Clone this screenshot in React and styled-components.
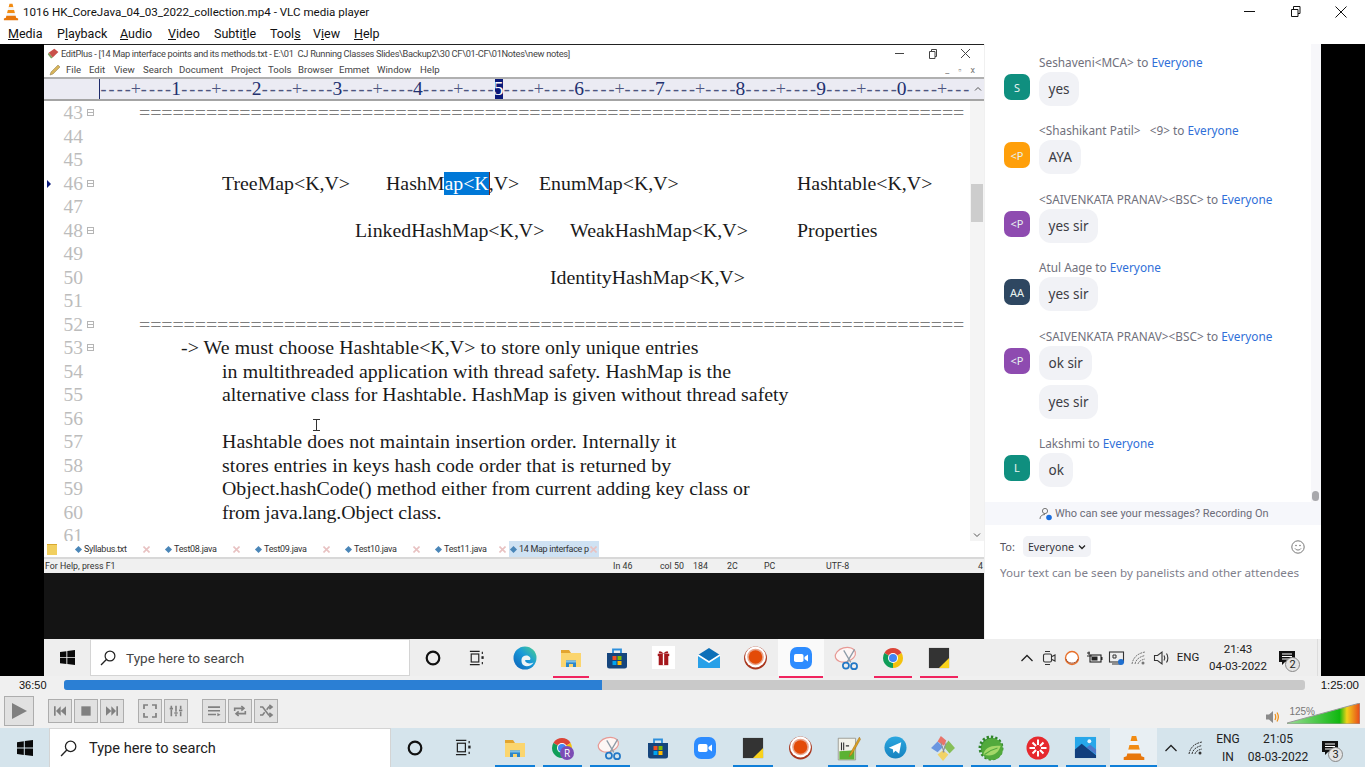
import React from 'react';
import styled, { createGlobalStyle } from 'styled-components';

const GlobalStyle = createGlobalStyle`
  html, body {
    margin: 0;
    padding: 0;
    background: #000;
    overflow: hidden;
  }
`;

const UI_FONT = `Roboto, "Noto Sans", sans-serif`;
const CHAT_FONT = `"Noto Sans", "Open Sans", sans-serif`;
const SERIF = `"Liberation Serif", serif`;

/* ---------- small drawings ---------- */

const SvgBox = styled.svg`
  display: block;
  flex: none;
`;

const Svg = ({ s = 24, w, h, box = '0 0 24 24', children }) => (
  <SvgBox width={w || s} height={h || s} viewBox={box}>
    {children}
  </SvgBox>
);

const Cone = ({ s = 18 }) => (
  <Svg s={s}>
    <path d="M10 1h4l1.2 4.5H8.800z" fill="#f28c13" />
    <path d="M8.800 5.500h6.400l1 3.800H7.800z" fill="#f5f5f5" />
    <path d="M7.800 9.300h8.400l1.100 4.400H6.700z" fill="#f28c13" />
    <path d="M6.700 13.700h10.600l.9 3.300H5.800z" fill="#f5f5f5" />
    <path d="M5.800 17h12.400l.6 2.500 2.700 1v2.500H2.500v-2.500l2.700-1z" fill="#e8770c" />
  </Svg>
);

const WinLogo = ({ s = 16, c = '#0a0a0a' }) => (
  <Svg s={s} box="0 0 16 16">
    <path d="M0 2.200l6.800-1v6.400H0zM7.800 1l8.200-1v7.600H7.800zM0 8.600h6.800v6.300L0 14zM7.800 8.600H16V16l-8.200-1.100z" fill={c} />
  </Svg>
);

const SearchGlyph = ({ s = 16 }) => (
  <Svg s={s} box="0 0 16 16">
    <circle cx="10" cy="6" r="4.900" fill="none" stroke="#222" strokeWidth="1.200" />
    <path d="M6.400 9.500L1 15" stroke="#222" strokeWidth="1.300" />
  </Svg>
);

const Ring = ({ s = 16 }) => (
  <Svg s={s} box="0 0 16 16">
    <circle cx="8" cy="8" r="6.300" fill="none" stroke="#111" strokeWidth="2.200" />
  </Svg>
);

const TaskView = ({ s = 18 }) => (
  <Svg s={s} box="0 0 18 18">
    <path d="M1 1.500h11M1 16.500h11" stroke="#222" strokeWidth="1.300" />
    <rect x="2.500" y="4.500" width="8.500" height="9" fill="none" stroke="#222" strokeWidth="1.300" />
    <path d="M15 2v2.500M15 13.500V16" stroke="#222" strokeWidth="1.300" />
    <rect x="14" y="7" width="2.500" height="3" fill="#222" />
  </Svg>
);

const Edge = () => (
  <Svg s={24}>
    <defs>
      <linearGradient id="edgeFill" x1="0" y1="1" x2="1" y2="0">
        <stop offset="0" stopColor="#0b5fb8" />
        <stop offset=".55" stopColor="#1a9bd8" />
        <stop offset="1" stopColor="#4fd28a" />
      </linearGradient>
    </defs>
    <circle cx="12" cy="12" r="11.500" fill="url(#edgeFill)" />
    <path d="M8.500 13.500c.2-3.800 6-5.400 8.400-2.300.8 1 .7 2.300-.2 2.900h-4.500c-.6 2.600 3.300 4.700 8.300 2.300-1.600 3-6.200 4.800-9.500 3.200-2.200-1-2.700-3.800-2.500-6.100z" fill="#eef4f6" />
  </Svg>
);

const Folder = () => (
  <Svg s={24}>
    <path d="M2 4h8l2 3H2z" fill="#e3a52f" />
    <rect x="2" y="7" width="20" height="14" fill="#fbd56e" />
    <path d="M7 21v-6.500h10V21h-3v-3h-4v3z" fill="#2c86c9" />
    <rect x="7" y="14.500" width="10" height="2" fill="#7cc0e8" />
  </Svg>
);

const Store = () => (
  <Svg s={24}>
    <path d="M8 7V3.500h8V7" fill="none" stroke="#2e8fdc" strokeWidth="1.800" />
    <path d="M2 7h20v13a2.500 2.500 0 0 1-2.500 2.500h-15A2.500 2.500 0 0 1 2 20z" fill="#15457d" />
    <rect x="7.500" y="10" width="4" height="4" fill="#f25022" />
    <rect x="12.500" y="10" width="4" height="4" fill="#7fba00" />
    <rect x="7.500" y="15" width="4" height="4" fill="#00a4ef" />
    <rect x="12.500" y="15" width="4" height="4" fill="#ffb900" />
  </Svg>
);

const Gift = () => (
  <Svg s={23}>
    <rect width="24" height="24" fill="#fff" />
    <path d="M7 10h10v10H7z" fill="#a5171c" />
    <rect x="6" y="8" width="12" height="2.500" fill="#a5171c" />
    <rect x="11.300" y="8" width="1.400" height="12" fill="#fff" />
    <path d="M12 8c-3-4-6-2.500-4.500-.5zM12 8c3-4 6-2.500 4.500-.5z" fill="#a5171c" />
  </Svg>
);

const Mail = () => (
  <Svg s={24}>
    <path d="M1 9l11-7 11 7v13H1z" fill="#0c6fb8" />
    <path d="M1 9l11 7 11-7v13H1z" fill="#28a0e8" />
    <path d="M1 9l11 7 11-7" fill="none" stroke="#fff" strokeWidth="1.500" />
  </Svg>
);

const Record = () => (
  <Svg s={25}>
    <circle cx="12" cy="12.500" r="11" fill="#a9361d" />
    <circle cx="12" cy="11.500" r="10" fill="#fff" />
    <circle cx="12" cy="11.500" r="8" fill="#e8a48c" />
    <circle cx="12" cy="11.500" r="6.500" fill="#e34b08" />
  </Svg>
);

const ZoomApp = () => (
  <Svg s={24}>
    <rect x="1" y="1" width="22" height="22" rx="7" fill="#2d8cff" />
    <rect x="5" y="8" width="9.500" height="8" rx="1.800" fill="#fff" />
    <path d="M15.500 11l3.500-2.600v7.200L15.500 13z" fill="#fff" />
  </Svg>
);

const Snip = () => (
  <Svg s={26}>
    <ellipse cx="10.500" cy="9" rx="9.500" ry="6.500" transform="rotate(-15 10.500 9)" fill="#fdf6f5" stroke="#e79a95" strokeWidth="1.100" />
    <path d="M9 5l6.500 11M19 4l-7 12" stroke="#8f9ca8" strokeWidth="1.200" />
    <circle cx="11" cy="19" r="2.800" fill="none" stroke="#2378c6" strokeWidth="1.600" />
    <circle cx="18.500" cy="19.500" r="2.800" fill="none" stroke="#2378c6" strokeWidth="1.600" />
  </Svg>
);

const Chrome = ({ badge }) => (
  <Svg s={24}>
    <path d="M12 12L3.340 7A10 10 0 0 1 20.660 7z" fill="#db4437" />
    <path d="M12 12l8.660-5A10 10 0 0 1 12 22z" fill="#f4c20d" />
    <path d="M12 12v10A10 10 0 0 1 3.340 7z" fill="#0f9d58" />
    <circle cx="12" cy="12" r="5" fill="#fff" />
    <circle cx="12" cy="12" r="4" fill="#4285f4" />
    {badge && (
      <>
        <circle cx="17" cy="17" r="7" fill="#7c4db5" />
        <text x="17" y="20.500" textAnchor="middle" fontSize="10" fontFamily="Open Sans" fill="#fff">R</text>
      </>
    )}
  </Svg>
);

const Sticky = () => (
  <Svg s={22}>
    <rect x="1" y="1" width="22" height="22" fill="#333" />
    <path d="M23 12v11H12z" fill="#f9d21c" />
  </Svg>
);

const NotePad = () => (
  <Svg s={26}>
    <path d="M3 3h16v20H3z" fill="#f3f3ea" stroke="#8a8a80" strokeWidth=".7" />
    <path d="M4 15l14-1v8.500H4z" fill="#5cb233" />
    <path d="M6 7v7M8 7v7M10 10h3" stroke="#333" strokeWidth="1" />
    <path d="M22.500 2l-8.500 15-1 3 2.500-2L23.500 4z" fill="#d9a21f" stroke="#a56a18" strokeWidth=".5" />
  </Svg>
);

const Telegram = () => (
  <Svg s={23}>
    <defs>
      <linearGradient id="tgFill" x1="0" y1="0" x2="0" y2="1">
        <stop offset="0" stopColor="#2ba7e0" />
        <stop offset="1" stopColor="#1682bf" />
      </linearGradient>
    </defs>
    <circle cx="12" cy="12" r="11.500" fill="url(#tgFill)" />
    <path d="M5 12.300l13-5.800-2.200 12-3.800-3-2.200 2.200-.6-4z" fill="#fff" />
  </Svg>
);

const Gems = () => (
  <Svg s={26}>
    <path d="M10 1l5 4-2 5-6-4z" fill="#e8736a" />
    <path d="M1 12l6-6 5 5-5 5z" fill="#6a96e0" />
    <path d="M17 5l6 7-5 5-5-6z" fill="#86bf58" />
    <path d="M12 14l5 4-5 6-5-6z" fill="#f2d365" />
    <path d="M10 7l3 9M15 7l-3 9" stroke="#8b8f96" strokeWidth="1" />
  </Svg>
);

const Leaf = () => (
  <Svg s={26}>
    <circle cx="12" cy="12" r="9.500" fill="#399432" stroke="#2f8429" strokeWidth="4" strokeDasharray="2 1.700" />
    <circle cx="13" cy="13" r="10" fill="#52aa3c" />
    <path d="M5 18c1-6 7-9 16-8-2 7-8 11-16 8z" fill="#a4d868" />
    <path d="M6 18c4-3 8-5 12-6" stroke="#52aa3c" strokeWidth="1" fill="none" />
  </Svg>
);

const RedStar = () => (
  <Svg s={24}>
    <circle cx="12" cy="12" r="11.500" fill="#e6292e" />
    <path d="M12 3.500v5.500M12 15v5.500M3.500 12H9M15 12h5.500M6.500 6.500L10 10M14 14l3.500 3.500M17.500 6.500L14 10M10 14l-3.500 3.500" stroke="#fff" strokeWidth="2" />
  </Svg>
);

const Photo = () => (
  <Svg s={23}>
    <rect x="1" y="1" width="22" height="22" fill="#27a7ea" />
    <path d="M1 23v-9l7-6 15 12v3z" fill="#123f7d" />
    <path d="M13 12l4-3 6 5v5z" fill="#4f78c9" />
    <circle cx="16" cy="5.500" r="2" fill="#eaf7ff" />
  </Svg>
);

/* ---------- tray glyphs ---------- */

const Caret = () => (
  <Svg s={14} box="0 0 14 14">
    <path d="M1.500 10L7 4.500 12.500 10" fill="none" stroke="#222" strokeWidth="1.300" />
  </Svg>
);

const Wifi = ({ c = '#333' }) => (
  <Svg s={16} box="0 0 16 16">
    <path d="M1 14C2 8 6 3.500 14 2M4 14c.8-4 3.500-7 10-8.500M7 14c.5-2 2-3.800 7-5" fill="none" stroke={c} strokeWidth="1" strokeDasharray="2 .8" />
    <circle cx="12" cy="13" r="1.500" fill={c} />
  </Svg>
);

const Speaker = () => (
  <Svg s={18} box="0 0 18 18">
    <path d="M1.500 6.500h3L9 3v12l-4.500-3.500h-3z" fill="none" stroke="#333" strokeWidth="1.100" />
    <path d="M11 6.500c1 1.500 1 3.500 0 5M13.500 4.500c1.800 2.500 1.800 6.500 0 9" fill="none" stroke="#333" strokeWidth="1.100" />
  </Svg>
);

const CamTray = () => (
  <Svg s={16} box="0 0 16 16">
    <rect x="2.500" y="4" width="8" height="8" rx="1.500" fill="none" stroke="#333" strokeWidth="1.100" />
    <path d="M11 6.500l3-1.500v6l-3-1.500M4 1.500h5M4 14.500h5" fill="none" stroke="#333" strokeWidth="1.100" />
  </Svg>
);

const RingTray = () => (
  <Svg s={16} box="0 0 16 16">
    <circle cx="8" cy="8" r="6.500" fill="#fff" stroke="#e8702a" strokeWidth="1.400" />
    <path d="M2 9c1 5 10 6 12 0" fill="none" stroke="#9c4a2a" strokeWidth="1" />
  </Svg>
);

const BatteryTray = () => (
  <Svg s={17} box="0 0 17 17">
    <path d="M1 4h3M3 2.500V6M1 7h5" stroke="#222" strokeWidth="1" />
    <rect x="4" y="6" width="11" height="7" fill="none" stroke="#222" strokeWidth="1.100" />
    <rect x="5.500" y="7.500" width="6" height="4" fill="#222" />
    <rect x="15" y="8" width="1.500" height="3" fill="#222" />
  </Svg>
);

const ScreenTray = () => (
  <Svg s={18} box="0 0 18 18">
    <rect x="1.500" y="3" width="14" height="10" fill="none" stroke="#333" strokeWidth="1.100" />
    <path d="M5 6h3v3H5zM4 15h9" fill="none" stroke="#333" strokeWidth="1" />
    <circle cx="13" cy="13" r="3" fill="#1f6fd0" />
  </Svg>
);

const NotifGlyph = ({ n }) => (
  <NotifWrap>
    <Svg w={16} h={16} box="0 0 16 16">
      <path d="M0 1h16v11H6l-3 3v-3H0z" fill="#111" />
      <path d="M3 4h10M3 6.500h10M3 9h7" stroke="#fff" strokeWidth="1" />
    </Svg>
    <NotifBadge>{n}</NotifBadge>
  </NotifWrap>
);

const TabX = () => (
  <Svg s={7} box="0 0 7 7">
    <path d="M.5.5l6 6M6.500.5l-6 6" stroke="#e8c2c2" strokeWidth="1.600" />
  </Svg>
);

/* ---------- vlc transport glyphs ---------- */

const G = '#808080';
const glyphs = {
  prev: <path d="M3 5h2.500v14H3zM13 5v14L6 12zM21 5v14l-8-7z" fill={G} />,
  stop: <rect x="5" y="5" width="14" height="14" fill={G} />,
  next: <path d="M21 5h-2.500v14H21zM11 5v14l7-7zM3 5v14l8-7z" fill={G} />,
  full: <path d="M3 9V3h6M15 3h6v6M21 15v6h-6M9 21H3v-6" fill="none" stroke={G} strokeWidth="2.600" />,
  ext: <path d="M5 20V10M5 7V4M12 20v-3M12 13V4M19 20v-7M19 9V4M2.500 8.500h5M9.500 15h5M16.500 11h5" fill="none" stroke={G} strokeWidth="2.400" />,
  list: <path d="M3 5h18v2.400H3zM3 10.500h18v2.400H3zM3 16h12v2.400H3zM17 15l5 2.500-5 2.500z" fill={G} />,
  loop: <path d="M4 12V8h13M14 4.500L18 8l-4 3.500M20 12v4H7M10 12.500L6 16l4 3.500" fill="none" stroke={G} strokeWidth="2.400" />,
  rand: <path d="M3 6h4l9 12h3M3 18h4l3-4M13 10l3-4h3M17 3l4 3-4 3M17 15l4 3-4 3" fill="none" stroke={G} strokeWidth="2.400" />,
};

const Glyph = ({ name }) => <Svg s={16}>{glyphs[name]}</Svg>;

/* ---------- page frame ---------- */

const Page = styled.div`
  width: 1365px;
  height: 767px;
  display: flex;
  flex-direction: column;
  overflow: hidden;
  background: #f0f0f0;
  font-family: ${UI_FONT};
`;

const TitleBar = styled.div`
  height: 23px;
  display: flex;
  align-items: center;
  background: #fff;
  padding-left: 2px;
  color: #111;
  font-size: 11.600px;
`;

const TitleText = styled.span`
  margin-left: 3px;
  white-space: nowrap;
`;

const WinButtons = styled.div`
  margin-left: auto;
  display: flex;
  padding-right: 1px;
`;

const WinButton = styled.div`
  width: 46px;
  height: 23px;
  display: flex;
  align-items: center;
  justify-content: center;
`;

const MenuBar = styled.div`
  height: 21px;
  display: flex;
  align-items: center;
  background: #fff;
  color: #111;
  font-size: 12.500px;
  padding-left: 8px;
`;

const MenuItem = styled.span`
  width: ${p => p.$w}px;
  white-space: nowrap;
`;

const VideoArea = styled.div`
  height: 632px;
  padding: 0 44px;
  background: #000;
  display: flex;
  flex-direction: column;
  position: relative;
  z-index: 1;
`;

const Stage = styled.div`
  height: 595px;
  display: flex;
  background: #fff;
`;

/* ---------- editplus ---------- */

const EditPlus = styled.div`
  width: 940px;
  display: flex;
  flex-direction: column;
  border-top: 1px solid #222;
  box-sizing: border-box;
  color: #444;
`;

const EpTitle = styled.div`
  height: 17px;
  display: flex;
  align-items: center;
  padding-left: 3px;
  gap: 1px;
  font-size: 9.250px;
  letter-spacing: -0.3px;
  white-space: nowrap;
  background: #fff;
`;

const EpButtons = styled.div`
  margin-left: auto;
  display: flex;
  align-items: center;
  padding-right: 13px;
  gap: 22px;
  color: #444;
`;

const EpMenu = styled.div`
  height: 15px;
  display: flex;
  align-items: center;
  padding-left: 5px;
  font-size: 9.600px;
  background: #fff;
`;

const EpMenuItem = styled.span`
  width: ${p => p.$w}px;
  white-space: nowrap;
`;

const EpPencil = styled.div`
  width: 17px;
`;

const EpSmallButtons = styled.div`
  margin-left: auto;
  display: flex;
  gap: 9px;
  padding-right: 9px;
  font-size: 9px;
  color: #777;
`;

const RulerRow = styled.div`
  height: 24px;
  display: flex;
  box-sizing: border-box;
  border-top: 2px solid #b0b0b0;
  border-bottom: 2px solid #a4a4a4;
  background: #ebebf3;
  overflow: hidden;
`;

const RulerGap = styled.div`
  width: 54.500px;
  flex: none;
  border-right: 1px solid #1d2a6b;
`;

const RulerChar = styled.span`
  flex: none;
  width: 8.067px;
  height: 20px;
  display: flex;
  align-items: center;
  justify-content: center;
  font-family: ${SERIF};
  font-size: ${p => (p.$digit ? 19.500 : 18)}px;
  color: ${p => (p.$on ? '#fff' : p.$digit ? '#22306f' : '#4d5580')};
  background: ${p => (p.$on ? '#0a1a7a' : 'transparent')};
`;

const RulerEnd = styled.div`
  margin-left: auto;
  width: 13px;
  flex: none;
  background: #ebebf3;
  color: #555;
  display: flex;
  align-items: center;
  justify-content: center;
  position: relative;
  z-index: 1;
`;

const EditorWrap = styled.div`
  height: 440px;
  display: flex;
  position: relative;
  background: #fff;
`;

const Lines = styled.div`
  flex: 1;
  overflow: hidden;
  font-family: ${SERIF};
  font-size: 19.850px;
  color: #1a1a1a;
`;

const Line = styled.div`
  height: 23.530px;
  line-height: 23.530px;
  display: flex;
  white-space: pre;
`;

const Gutter = styled.div`
  width: 55px;
  flex: none;
  display: flex;
  align-items: center;
  color: #bcbcbc;
  font-size: 19.500px;
  position: relative;
`;

const LineNo = styled.span`
  width: 39px;
  text-align: right;
`;

const FoldBox = styled.span`
  margin-left: 4px;
  width: 7px;
  height: 7px;
  box-sizing: border-box;
  border: 1px solid #b5b5b5;
  display: flex;
  align-items: center;

  &::after {
    content: '';
    display: block;
    width: 100%;
    height: 1px;
    background: #b5b5b5;
  }
`;

const Marker = styled.span`
  position: absolute;
  left: 3px;
  top: 8px;
  border-left: 4px solid #0a1a7a;
  border-top: 4px solid transparent;
  border-bottom: 4px solid transparent;
`;

const Cell = styled.span`
  flex: none;
  width: ${p => p.$w}px;
  margin-left: ${p => p.$pad || 0}px;
  letter-spacing: ${p => p.$ls || 0}px;
`;

const Selected = styled.span`
  display: inline-block;
  background: #0078d7;
  color: #fff;
  border-right: 1px solid #7a2a1a;
  margin-right: -1px;
`;

const Separator = styled.div`
  margin-left: 40px;
  color: #7d7d7d;
  letter-spacing: -0.040px;
`;

const IBeam = styled.span`
  position: absolute;
  left: 269px;
  top: 318px;
  width: 7px;
  height: 12px;
  border-top: 1px solid #333;
  border-bottom: 1px solid #333;
  box-sizing: border-box;

  &::after {
    content: '';
    position: absolute;
    left: 3px;
    top: 0;
    width: 1px;
    height: 100%;
    background: #333;
  }
`;

const EdScroll = styled.div`
  width: 14px;
  flex: none;
  background: #f4f4f4;
  display: flex;
  flex-direction: column;
  justify-content: flex-end;
  position: relative;
  align-items: center;
  padding-bottom: 2px;
  box-sizing: border-box;
`;

const EdThumb = styled.div`
  position: absolute;
  left: 1px;
  right: 1px;
  top: 83px;
  height: 38px;
  background: #cdcdcd;
`;

const TabRow = styled.div`
  height: 18px;
  display: flex;
  align-items: stretch;
  box-sizing: border-box;
  border-bottom: 2px solid #d8d8d8;
  background: #fff;
  font-size: 9px;
  letter-spacing: -0.3px;
  color: #333;
  white-space: nowrap;
`;

const FolderTab = styled.div`
  width: 31px;
  flex: none;
  padding: 3px 0 0 3px;
  box-sizing: border-box;
`;

const FolderMark = styled.div`
  width: 10px;
  height: 10px;
  background: #f1cf5f;
  border-top: 1px solid #d9a92f;
`;

const Tab = styled.div`
  width: ${p => p.$w}px;
  flex: none;
  display: flex;
  align-items: center;
  padding-left: ${p => (p.$active ? 2 : 1)}px;
  box-sizing: border-box;
  background: ${p => (p.$active ? '#cfe2f3' : 'transparent')};
`;

const Diamond = styled.span`
  width: 5px;
  height: 5px;
  flex: none;
  margin-right: 3px;
  background: #4a86b8;
  transform: rotate(45deg);
`;

const TabClose = styled.span`
  margin-left: auto;
  margin-right: ${p => p.$gap}px;
`;

const StatusRow = styled.div`
  height: 14px;
  display: flex;
  align-items: center;
  background: #f0f0f0;
  color: #333;
  font-size: 8.800px;
  padding-left: 1px;
  white-space: nowrap;
`;

const StatusField = styled.span`
  flex: none;
  width: ${p => p.$w}px;
`;

const DarkPanel = styled.div`
  flex: 1;
  background: #141414;
`;

/* ---------- zoom chat ---------- */

const Chat = styled.div`
  width: 337px;
  display: flex;
  flex-direction: column;
  background: #fff;
  border-left: 1px solid #f0f0f0;
  box-sizing: border-box;
  font-family: ${CHAT_FONT};
`;

const ChatList = styled.div`
  height: 458px;
  padding: 9px 0 0 19px;
  box-sizing: border-box;
  position: relative;
  display: flex;
  flex-direction: column;
  gap: 15.400px;
  overflow: hidden;

  &::before {
    content: '';
    position: absolute;
    top: 0;
    right: 0;
    bottom: 0;
    width: 10px;
    background: #f7f7fa;
  }
`;

const ChatThumb = styled.div`
  position: absolute;
  right: 2px;
  bottom: 1px;
  width: 7px;
  height: 10px;
  border-radius: 4px;
  background: #a8a8ac;
`;

const Message = styled.div`
  display: flex;
  flex-direction: column;
  gap: 1px;
`;

const Sender = styled.div`
  height: 18px;
  line-height: 18px;
  margin-left: 35px;
  font-size: 11.800px;
  color: #70707c;
  white-space: pre;
`;

const To = styled.span`
  color: #2f6fd8;
`;

const BubbleRow = styled.div`
  display: flex;
  align-items: flex-start;
  gap: 9px;
`;

const Avatar = styled.div`
  width: 26px;
  height: 26px;
  margin-top: 2px;
  border-radius: 7px;
  background: ${p => p.$bg};
  color: #e8f2f0;
  font-size: 11px;
  display: flex;
  align-items: center;
  justify-content: center;
`;

const Bubble = styled.div`
  height: 34px;
  padding: 0 9.500px;
  border-radius: 12px;
  background: #f1f2f6;
  color: #3c3c44;
  font-size: 13.500px;
  display: flex;
  align-items: center;
  margin-left: ${p => (p.$plain ? 35 : 0)}px;
  margin-top: ${p => (p.$plain ? 4 : 0)}px;
  align-self: flex-start;
`;

const Banner = styled.div`
  height: 23px;
  background: #f6f7fb;
  display: flex;
  align-items: center;
  gap: 2px;
  font-family: ${UI_FONT};
  font-size: 11px;
  color: #6c6c78;
  padding-left: 54px;
`;

const ToRow = styled.div`
  display: flex;
  align-items: center;
  padding: 11px 16px 0 15px;
  font-size: 11px;
  color: #55555f;
`;

const ToSelect = styled.div`
  margin-left: 8px;
  width: 68px;
  height: 21px;
  border-radius: 5px;
  background: #f1f2f6;
  color: #33333b;
  font-size: 10.600px;
  display: flex;
  align-items: center;
  justify-content: center;
  gap: 4px;
`;

const Smiley = styled.div`
  margin-left: auto;
`;

const Placeholder = styled.div`
  padding: 8px 0 0 15px;
  font-size: 11.650px;
  color: #80808c;
  white-space: nowrap;
`;

/* ---------- taskbars ---------- */

const Bar = styled.div`
  height: ${p => p.$h}px;
  display: flex;
  align-items: stretch;
  background: ${p => p.$bg};
  flex: none;
`;

const Tile = styled.div`
  width: ${p => p.$w}px;
  flex: none;
  box-sizing: border-box;
  padding-right: ${p => p.$pr || 0}px;
  display: flex;
  align-items: center;
  justify-content: center;
  position: relative;
  background: ${p => p.$hot || 'transparent'};

  &::after {
    content: '';
    display: ${p => (p.$line ? 'block' : 'none')};
    position: absolute;
    bottom: ${p => p.$lineAt}px;
    height: 2px;
    left: ${p => p.$inset || 0}px;
    right: ${p => p.$inset || 0}px;
    background: ${p => p.$line};
  }
`;

const SearchBox = styled.div`
  width: ${p => p.$w}px;
  flex: none;
  box-sizing: border-box;
  display: flex;
  align-items: center;
  gap: ${p => p.$gap}px;
  padding-left: ${p => p.$pad}px;
  background: #fff;
  border: 1px solid #d4d4d4;
  border-bottom-width: ${p => p.$bottom}px;
  color: ${p => p.$c};
  font-size: ${p => p.$fs}px;
`;

const Tray = styled.div`
  margin-left: auto;
  display: flex;
  align-items: stretch;
  padding-right: ${p => p.$pr}px;
  color: #222;
`;

const TrayItem = styled.div`
  width: ${p => p.$w}px;
  flex: none;
  display: flex;
  flex-direction: column;
  align-items: center;
  justify-content: center;
  white-space: nowrap;
  font-size: ${p => p.$fs || 12}px;
  line-height: ${p => p.$lh || 17}px;
`;

const NotifWrap = styled.div`
  position: relative;
  width: 16px;
  height: 16px;
  left: -3px;
`;

const NotifBadge = styled.span`
  position: absolute;
  left: 6px;
  top: 7px;
  width: 15px;
  height: 15px;
  box-sizing: border-box;
  border: 1px solid #888;
  border-radius: 50%;
  background: #e4e4e4;
  color: #222;
  font-size: 11px;
  line-height: 13px;
  text-align: center;
`;

const TrayRule = styled.div`
  width: 1px;
  height: 100%;
  margin: 0 3px 0 auto;
  background: #dcdcdc;
`;

/* ---------- vlc controls ---------- */

const SeekRow = styled.div`
  height: 18px;
  display: flex;
  align-items: center;
  background: #f0f0f0;
  font-family: "Liberation Sans", sans-serif;
  color: #111;
  flex: none;
`;

const ElapsedTime = styled.span`
  width: 64px;
  flex: none;
  box-sizing: border-box;
  padding-left: 19px;
  font-size: 11px;
`;

const TotalTime = styled.span`
  width: 60px;
  flex: none;
  box-sizing: border-box;
  padding-right: 6px;
  text-align: right;
  font-size: 11.500px;
`;

const Track = styled.div`
  width: 1241px;
  height: 10px;
  flex: none;
  border-radius: 3px;
  background: #c9c9c9;
  overflow: hidden;
`;

const Played = styled.div`
  height: 100%;
  background: #2b7fd4;
`;

const Controls = styled.div`
  height: 34px;
  flex: none;
  display: flex;
  align-items: center;
  background: #f0f0f0;
  padding-left: 4px;
`;

const PlayButton = styled.div`
  width: 30px;
  height: 30px;
  box-sizing: border-box;
  border: 1px solid #adadad;
  background: #e1e1e1;
  display: flex;
  align-items: center;
  justify-content: center;
  margin-right: 14px;
`;

const Group = styled.div`
  display: flex;
  gap: 2px;
  margin-right: 14px;
`;

const CtlButton = styled.div`
  width: 24px;
  height: 24px;
  box-sizing: border-box;
  border: 1px solid #adadad;
  background: #e1e1e1;
  display: flex;
  align-items: center;
  justify-content: center;
`;

const Volume = styled.div`
  margin-left: auto;
  align-self: flex-end;
  display: flex;
  align-items: flex-end;
  gap: 7px;
  padding: 0 5px 4px 0;
  position: relative;
`;

const VolumeLabel = styled.span`
  position: absolute;
  right: 50px;
  top: 3px;
  font-family: "Liberation Sans", sans-serif;
  font-size: 10px;
  color: #777;
`;

/* ---------- data ---------- */

const RULER = Array.from({ length: 11 }, (_, i) => `----+----${(i + 1) % 10}`).join('');

const SEP = '='.repeat(74);

const LINES = [
  { n: 43, fold: true, sep: true },
  { n: 44 },
  { n: 45 },
  { n: 46, fold: true, mark: true, cells: [
    { pad: 123, w: 164, t: 'TreeMap<K,V>' },
    { w: 153, t: <>HashM<Selected>ap&lt;K</Selected>,V&gt;</> },
    { w: 258, t: 'EnumMap<K,V>' },
    { w: 160, t: 'Hashtable<K,V>' },
  ] },
  { n: 47 },
  { n: 48, fold: true, cells: [
    { pad: 256, w: 215, t: 'LinkedHashMap<K,V>' },
    { w: 227, t: 'WeakHashMap<K,V>' },
    { w: 120, t: 'Properties' },
  ] },
  { n: 49 },
  { n: 50, cells: [{ pad: 451, w: 220, t: 'IdentityHashMap<K,V>' }] },
  { n: 51 },
  { n: 52, fold: true, sep: true },
  { n: 53, fold: true, cells: [{ pad: 82, w: 600, ls: 0.07, t: '-> We must choose Hashtable<K,V> to store only unique entries' }] },
  { n: 54, cells: [{ pad: 123, w: 600, ls: 0.08, t: 'in multithreaded application with thread safety. HashMap is the' }] },
  { n: 55, cells: [{ pad: 123, w: 700, t: 'alternative class for Hashtable. HashMap is given without thread safety' }] },
  { n: 56 },
  { n: 57, cells: [{ pad: 123, w: 600, ls: 0.1, t: 'Hashtable does not maintain insertion order. Internally it' }] },
  { n: 58, cells: [{ pad: 123, w: 600, ls: 0.07, t: 'stores entries in keys hash code order that is returned by' }] },
  { n: 59, cells: [{ pad: 123, w: 700, ls: 0.02, t: 'Object.hashCode() method either from current adding key class or' }] },
  { n: 60, cells: [{ pad: 123, w: 600, ls: -0.1, t: 'from java.lang.Object class.' }] },
  { n: 61 },
];

const MESSAGES = [
  { who: 'Seshaveni<MCA>', init: 'S', bg: '#0f8f7f', texts: ['yes'] },
  { who: '<Shashikant Patil>   <9>', init: '<P', bg: '#ff9f0a', texts: ['AYA'] },
  { who: '<SAIVENKATA PRANAV><BSC>', init: '<P', bg: '#8e4bb0', texts: ['yes sir'] },
  { who: 'Atul Aage', init: 'AA', bg: '#2e4761', texts: ['yes sir'] },
  { who: '<SAIVENKATA PRANAV><BSC>', init: '<P', bg: '#8e4bb0', texts: ['ok sir', 'yes sir'] },
  { who: 'Lakshmi', init: 'L', bg: '#0f8f7f', texts: ['ok'] },
];

const MENU = [
  [<><u>M</u>edia</>, 49], [<>P<u>l</u>ayback</>, 63], [<><u>A</u>udio</>, 48], [<><u>V</u>ideo</>, 46],
  [<>Subti<u>t</u>le</>, 56], [<>Tool<u>s</u></>, 43], [<>V<u>i</u>ew</>, 41], [<><u>H</u>elp</>, 40],
];

const EP_MENU = [
  ['File', 23], ['Edit', 25], ['View', 29], ['Search', 36], ['Document', 52], ['Project', 37],
  ['Tools', 30], ['Browser', 41], ['Emmet', 38], ['Window', 43], ['Help', 30],
];

const TABS = [
  ['Syllabus.txt', 90, 15], ['Test08.java', 90, 15], ['Test09.java', 90, 15], ['Test10.java', 90, 15], ['Test11.java', 74, 3],
];

const STATUS = [
  ['In 46', 47], ['col 50', 33], ['184', 34], ['2C', 37], ['PC', 62], ['UTF-8', 152], ['4', 10],
];

const PINK = '#f0245f';
const BLUE = '#0f7fd8';

const INNER_TILES = [
  [<Edge key="e" />], [<Folder key="f" />, PINK, 5], [<Store key="s" />], [<Gift key="g" />], [<Mail key="m" />],
  [<Record key="r" />], [<ZoomApp key="z" />, PINK, 1, '#fafafa'], [<Snip key="n" />], [<Chrome key="c" />, PINK, 4], [<Sticky key="k" />, PINK, 4],
];

const OUTER_TILES = [
  [<Folder key="f" />, BLUE, 4], [<Chrome key="c" badge />, BLUE, 4], [<Snip key="n" />, BLUE, 4], [<Store key="s" />], [<ZoomApp key="z" />],
  [<Sticky key="k" />, BLUE, 4], [<Record key="r" />], [<NotePad key="p" />, BLUE, 4], [<Telegram key="t" />, BLUE, 4], [<Gems key="g" />, BLUE, 4],
  [<Leaf key="l" />, BLUE, 4], [<RedStar key="x" />, BLUE, 4], [<Photo key="o" />, BLUE, 4], [<Cone key="v" s={26} />, BLUE, 0, '#e8eff3'],
];

/* ---------- parts ---------- */

const Editor = () => (
  <EditorWrap>
    <Lines>
      {LINES.map(l => (
        <Line key={l.n}>
          <Gutter>
            {l.mark && <Marker />}
            <LineNo>{l.n}</LineNo>
            {l.fold && <FoldBox />}
          </Gutter>
          {l.sep && <Separator>{SEP}</Separator>}
          {l.cells && l.cells.map((c, i) => <Cell key={i} $pad={c.pad} $w={c.w} $ls={c.ls}>{c.t}</Cell>)}
        </Line>
      ))}
    </Lines>
    <IBeam />
    <EdScroll>
      <EdThumb />
      <Svg s={8} box="0 0 8 8"><path d="M1 2.500L4 5.500 7 2.500" fill="none" stroke="#555" /></Svg>
    </EdScroll>
  </EditorWrap>
);

const EditPlusWindow = () => (
  <EditPlus>
    <EpTitle>
      <Svg s={13} box="0 0 16 16">
        <path d="M2 7l7-5 5 4-7 7z" fill="#c9504a" />
        <path d="M2 7l5 6-2 1-4-5z" fill="#7d9c5a" />
      </Svg>
      EditPlus - [14 Map interface points and its methods.txt - E:\01&nbsp; CJ Running Classes Slides\Backup2\30 CF\01-CF\01Notes\new notes]
      <EpButtons>
        <Svg s={11} box="0 0 11 11"><path d="M1 5.500h9" stroke="#444" /></Svg>
        <Svg s={11} box="0 0 11 11"><path d="M2.500 3.500h5.500v7H2.500zM4.500 3.500V1.500h5v7H8" fill="none" stroke="#444" /></Svg>
        <Svg s={11} box="0 0 11 11"><path d="M1 1l9 9M10 1l-9 9" stroke="#444" /></Svg>
      </EpButtons>
    </EpTitle>
    <EpMenu>
      <EpPencil>
        <Svg s={12} box="0 0 12 12"><path d="M1 11l1-3 7-7 2 2-7 7z" fill="#d8b45a" stroke="#8c7a4a" strokeWidth=".5" /></Svg>
      </EpPencil>
      {EP_MENU.map(([t, w]) => <EpMenuItem key={t} $w={w}>{t}</EpMenuItem>)}
      <EpSmallButtons><span>_</span><span>▫</span><span>x</span></EpSmallButtons>
    </EpMenu>
    <RulerRow>
      <RulerGap />
      {RULER.slice(0, 108).split('').map((ch, i) => (
        <RulerChar key={i} $digit={ch >= '0' && ch <= '9'} $on={i === 49}>{ch}</RulerChar>
      ))}
      <RulerEnd>
        <Svg s={8} box="0 0 8 8"><path d="M1 5.500L4 2.500 7 5.500" fill="none" stroke="#555" /></Svg>
      </RulerEnd>
    </RulerRow>
    <Editor />
    <TabRow>
      <FolderTab><FolderMark /></FolderTab>
      {TABS.map(([t, w, gap]) => (
        <Tab key={t} $w={w}>
          <Diamond />{t}<TabClose $gap={gap}><TabX /></TabClose>
        </Tab>
      ))}
      <Tab $w={90} $active>
        <Diamond />14 Map interface p<TabClose $gap={2}><TabX /></TabClose>
      </Tab>
    </TabRow>
    <StatusRow>
      <StatusField $w={568}>For Help, press F1</StatusField>
      {STATUS.map(([t, w]) => <StatusField key={t} $w={w}>{t}</StatusField>)}
    </StatusRow>
    <DarkPanel />
  </EditPlus>
);

const ChatPanel = () => (
  <Chat>
    <ChatList>
      {MESSAGES.map((m, i) => (
        <Message key={i}>
          <Sender>{m.who} to <To>Everyone</To></Sender>
          <BubbleRow>
            <Avatar $bg={m.bg}>{m.init}</Avatar>
            <Bubble>{m.texts[0]}</Bubble>
          </BubbleRow>
          {m.texts.slice(1).map(t => <Bubble key={t} $plain>{t}</Bubble>)}
        </Message>
      ))}
      <ChatThumb />
    </ChatList>
    <Banner>
      <Svg s={14} box="0 0 14 14">
        <circle cx="6" cy="4" r="2.600" fill="none" stroke="#777" />
        <path d="M1 12c0-3 2-4.500 5-4.500" fill="none" stroke="#777" />
        <circle cx="10" cy="10.500" r="2.800" fill="#1a6fe0" />
      </Svg>
      Who can see your messages? Recording On
    </Banner>
    <ToRow>
      To:
      <ToSelect>
        Everyone
        <Svg s={8} box="0 0 8 8"><path d="M1 2.500L4 5.500 7 2.500" fill="none" stroke="#222" strokeWidth="1.300" /></Svg>
      </ToSelect>
      <Smiley>
        <Svg s={14} box="0 0 14 14">
          <circle cx="7" cy="7" r="6.200" fill="none" stroke="#777" />
          <circle cx="5" cy="5.500" r=".8" fill="#777" />
          <circle cx="9" cy="5.500" r=".8" fill="#777" />
          <path d="M4 8.500c1.500 2 4.500 2 6 0" fill="none" stroke="#777" />
        </Svg>
      </Smiley>
    </ToRow>
    <Placeholder>Your text can be seen by panelists and other attendees</Placeholder>
  </Chat>
);

const InnerTaskbar = () => (
  <Bar $h={37} $bg="#eeeeee">
    <Tile $w={46}><WinLogo s={15} /></Tile>
    <SearchBox $w={320} $pad={9} $gap={10} $bottom={1} $c="#444" $fs={13.600}>
      <SearchGlyph s={16} />Type here to search
    </SearchBox>
    <Tile $w={46}><Ring s={16} /></Tile>
    <Tile $w={46} $pr={4}><TaskView s={16} /></Tile>
    {INNER_TILES.map(([icon, line, inset, hot], i) => (
      <Tile key={i} $w={46} $line={line} $inset={inset} $lineAt={-2} $hot={hot}>{icon}</Tile>
    ))}
    <Tray $pr={0}>
      <TrayItem $w={22.500}><Caret /></TrayItem>
      <TrayItem $w={22.500}><CamTray /></TrayItem>
      <TrayItem $w={22.500}><RingTray /></TrayItem>
      <TrayItem $w={22.500}><BatteryTray /></TrayItem>
      <TrayItem $w={22.500}><ScreenTray /></TrayItem>
      <TrayItem $w={22.500}><Wifi c="#777" /></TrayItem>
      <TrayItem $w={22.500}><Speaker /></TrayItem>
      <TrayItem $w={30} $fs={11.500}>ENG</TrayItem>
      <TrayItem $w={70} $fs={11.500}><span>21:43</span><span>04-03-2022</span></TrayItem>
      <TrayItem $w={34}><NotifGlyph n={2} /></TrayItem>
      <TrayItem $w={14}><TrayRule /></TrayItem>
    </Tray>
  </Bar>
);

const OuterTaskbar = () => (
  <Bar $h={39} $bg="#d5e4ec">
    <Tile $w={49}><WinLogo s={16} /></Tile>
    <SearchBox $w={342} $pad={10} $gap={12} $bottom={0} $c="#222" $fs={14.600}>
      <SearchGlyph s={17} />Type here to search
    </SearchBox>
    <Tile $w={48}><Ring s={16} /></Tile>
    <Tile $w={52} $pr={4}><TaskView s={17} /></Tile>
    {OUTER_TILES.map(([icon, line, inset, hot], i) => (
      <Tile key={i} $w={47.600} $line={line} $inset={inset} $lineAt={0} $hot={hot}>{icon}</Tile>
    ))}
    <Tray $pr={7}>
      <TrayItem $w={25}><Caret /></TrayItem>
      <TrayItem $w={25}><Wifi /></TrayItem>
      <TrayItem $w={40} $lh={18}><span>ENG</span><span>IN</span></TrayItem>
      <TrayItem $w={60} $lh={18}><span>21:05</span><span>08-03-2022</span></TrayItem>
      <TrayItem $w={50}><NotifGlyph n={3} /></TrayItem>
    </Tray>
  </Bar>
);

const App = () => (
  <Page>
    <GlobalStyle />
    <TitleBar>
      <Cone s={18} />
      <TitleText>1016 HK_CoreJava_04_03_2022_collection.mp4 - VLC media player</TitleText>
      <WinButtons>
        <WinButton><Svg s={11} box="0 0 11 11"><path d="M0 5.500h11" stroke="#111" /></Svg></WinButton>
        <WinButton><Svg s={11} box="0 0 11 11"><path d="M1.500 3.500h6.500v7H1.500zM3.500 3.500V.5h6.500v7H8" fill="none" stroke="#111" /></Svg></WinButton>
        <WinButton><Svg s={12} box="0 0 12 12"><path d="M.5.5l11 11M11.500.5l-11 11" stroke="#111" /></Svg></WinButton>
      </WinButtons>
    </TitleBar>
    <MenuBar>
      {MENU.map(([label, w], i) => <MenuItem key={i} $w={w}>{label}</MenuItem>)}
    </MenuBar>
    <VideoArea>
      <Stage>
        <EditPlusWindow />
        <ChatPanel />
      </Stage>
      <InnerTaskbar />
    </VideoArea>
    <SeekRow>
      <ElapsedTime>36:50</ElapsedTime>
      <Track><Played style={{ width: `${(538 / 1241) * 100}%` }} /></Track>
      <TotalTime>1:25:00</TotalTime>
    </SeekRow>
    <Controls>
      <PlayButton>
        <Svg s={20} box="0 0 20 20"><path d="M3 2l15 8-15 8z" fill={G} /></Svg>
      </PlayButton>
      <Group>
        <CtlButton><Glyph name="prev" /></CtlButton>
        <CtlButton><Glyph name="stop" /></CtlButton>
        <CtlButton><Glyph name="next" /></CtlButton>
      </Group>
      <Group>
        <CtlButton><Glyph name="full" /></CtlButton>
        <CtlButton><Glyph name="ext" /></CtlButton>
      </Group>
      <Group>
        <CtlButton><Glyph name="list" /></CtlButton>
        <CtlButton><Glyph name="loop" /></CtlButton>
        <CtlButton><Glyph name="rand" /></CtlButton>
      </Group>
      <Volume>
        <Svg s={14} box="0 0 14 14">
          <path d="M0 4.500h3L7 1v12L3 9.500H0z" fill="#8a8a8a" />
          <path d="M9 4c1 2 1 4 0 6M11 2.500c1.800 3 1.800 6 0 9" fill="none" stroke="#f0921e" strokeWidth="1.300" />
        </Svg>
        <VolumeLabel>125%</VolumeLabel>
        <Svg w={73} h={21} box="0 0 73 21">
          <defs>
            <linearGradient id="volFill" x1="0" x2="1" y1="0" y2="0">
              <stop offset="0" stopColor="#9bdc96" />
              <stop offset=".72" stopColor="#10b810" />
              <stop offset=".82" stopColor="#f2d21a" />
              <stop offset="1" stopColor="#e8461a" />
            </linearGradient>
          </defs>
          <path d="M0 20L73 0v21H0z" fill="url(#volFill)" />
          <path d="M0 20L73 0v21H0z" fill="none" stroke="#999" strokeWidth="1" />
        </Svg>
      </Volume>
    </Controls>
    <OuterTaskbar />
  </Page>
);

export default App;
